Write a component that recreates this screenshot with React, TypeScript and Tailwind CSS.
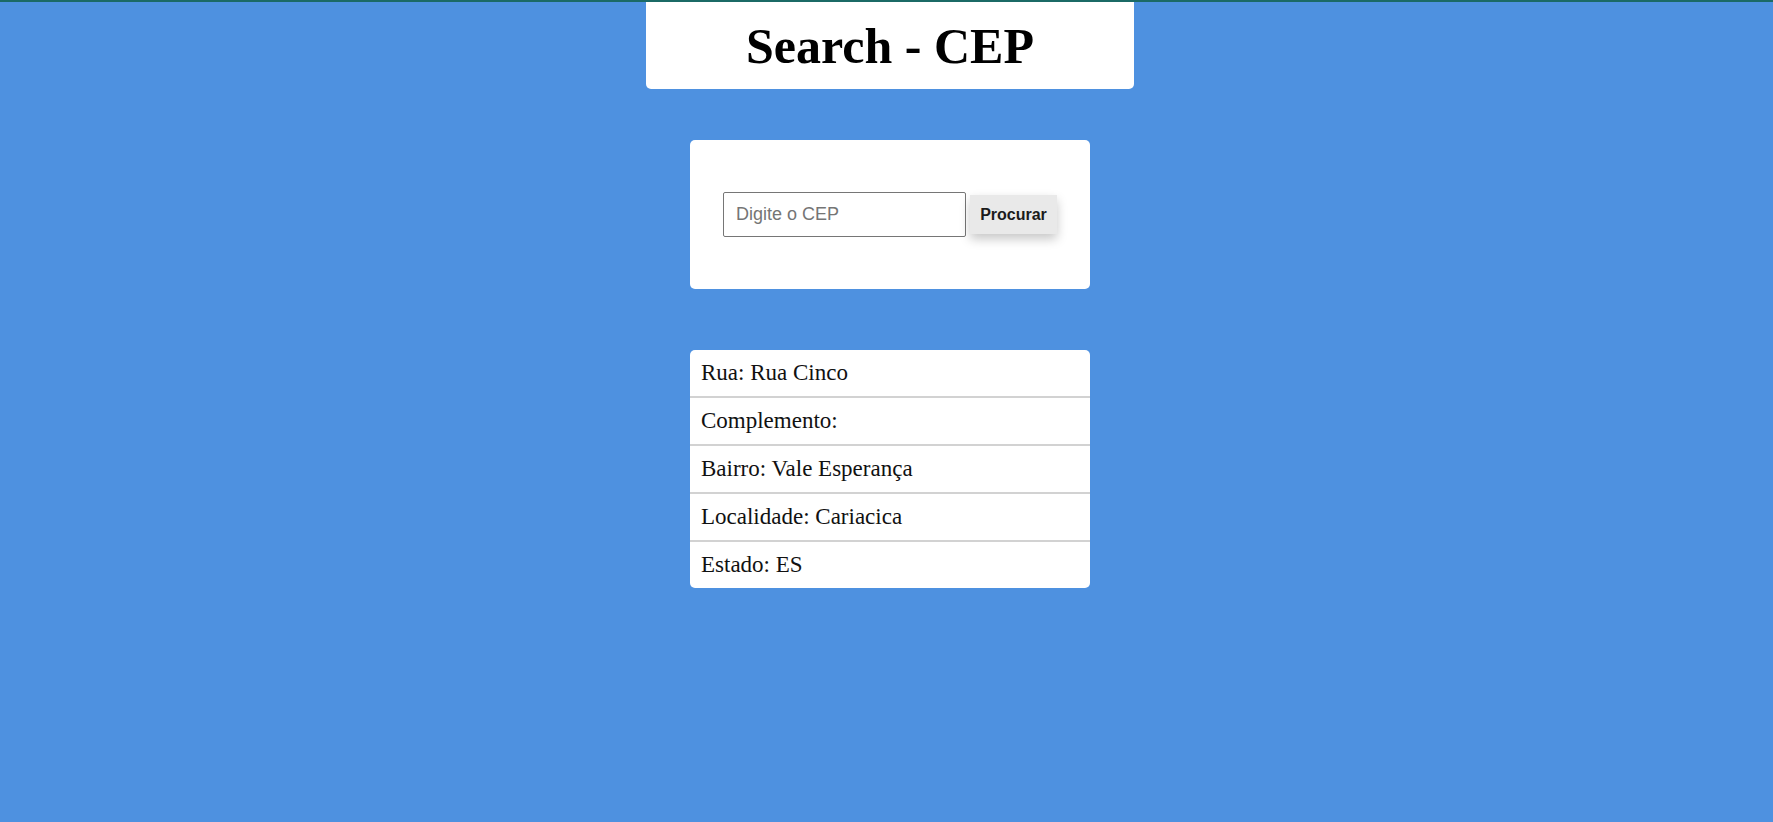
const rows = [
  { label: 'Rua', value: 'Rua Cinco' },
  { label: 'Complemento', value: '' },
  { label: 'Bairro', value: 'Vale Esperança' },
  { label: 'Localidade', value: 'Cariacica' },
  { label: 'Estado', value: 'ES' },
];

export default function App() {
  return (
    <div className="min-h-screen bg-[#4e91e0] font-['Liberation_Serif',serif]">
      <div className="h-[2px] bg-[#1b6a66]" />
      <div className="flex flex-col items-center pl-[7px]">
        <header className="w-[488px] h-[87px] bg-white rounded-b-[5px] flex justify-center pt-[16px]">
          <h1 className="text-[50px] font-bold leading-[57px] text-black">Search - CEP</h1>
        </header>

        <div className="mt-[51px] w-[400px] h-[149px] bg-white rounded-[5px] flex items-center justify-center font-['Liberation_Sans',sans-serif]">
          <input
            type="text"
            placeholder="Digite o CEP"
            className="w-[243px] h-[45px] border border-[#767676] rounded-[2px] px-[12px] text-[18px] text-black placeholder:text-[#757575] outline-none"
          />
          <button className="ml-[4px] w-[87px] h-[39px] bg-[#e9e9e9] text-[#1b1b1b] font-bold text-[16px] shadow-[0_5px_10px_rgba(0,0,0,0.22)]">
            Procurar
          </button>
        </div>

        <ul className="mt-[61px] w-[400px] bg-white rounded-[5px] overflow-hidden">
          {rows.map((r, i) => (
            <li
              key={r.label}
              className={
                'px-[11px] py-[10px] text-[23px] leading-[26px] text-[#111] ' +
                (i < rows.length - 1 ? 'border-b-2 border-[#d2d2d2]' : '')
              }
            >
              {r.label}: {r.value}
            </li>
          ))}
        </ul>
      </div>
    </div>
  );
}
